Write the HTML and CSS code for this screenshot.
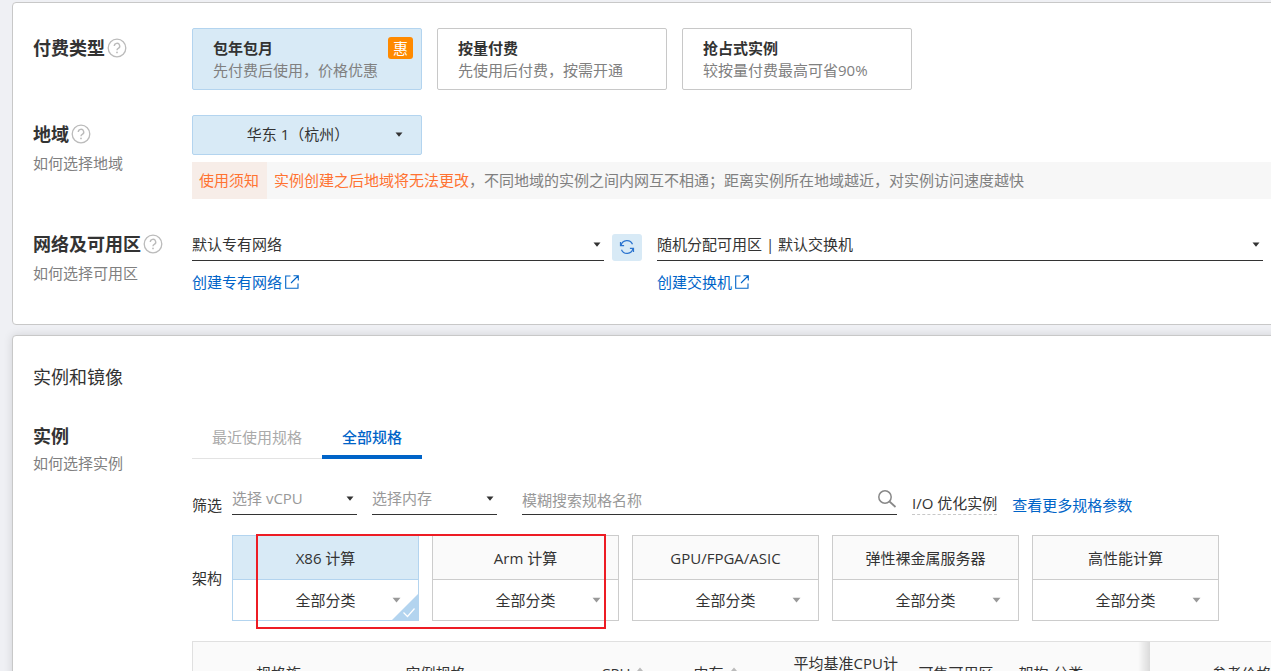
FILE: index.html
```html
<!DOCTYPE html>
<html lang="zh-CN">
<head>
<meta charset="utf-8">
<title>云服务器购买</title>
<link rel="stylesheet" href="styles.css">
</head>
<body>
<svg class="defs" aria-hidden="true">
  <symbol id="help" viewBox="0 0 20 20"><circle cx="10" cy="10" r="8.800" fill="none" stroke="#bbb" stroke-width="1.3"/><path d="M7.3 8.1a2.7 2.7 0 1 1 4 2.3c-.9.5-1.3.9-1.3 1.9" fill="none" stroke="#bbb" stroke-width="1.4"/><circle cx="10" cy="14.4" r=".9" fill="#bbb"/></symbol>
  <symbol id="caret" viewBox="0 0 8 5"><path d="M0.5 0.5h7L4 4.8z" fill="currentColor"/></symbol>
  <symbol id="ext" viewBox="0 0 14 14"><path d="M5.5 1H.7v12.3H13V8.500M8.500.8H13.300V5.500M13 1 6 8" fill="none" stroke="currentColor" stroke-width="1.1"/></symbol>
  <symbol id="sync" viewBox="0 0 16 16"><path d="M2.100 6.300A6 6 0 0 1 13.500 5.300M13.900 9.700A6 6 0 0 1 2.500 10.700" fill="none" stroke="#2b74cf" stroke-width="1.200"/><path d="M1.500 3v3.700h3.600M14.500 13V9.300h-3.600" fill="none" stroke="#2b74cf" stroke-width="1.200"/></symbol>
</svg>
<main class="page">
  <section class="panel">
    <div class="row row-pay">
      <h3 class="label">付费类型<svg class="help"><use href="#help"/></svg></h3>
      <div class="options">
        <button type="button" class="option selected"><strong>包年包月</strong><span>先付费后使用，价格优惠</span><em class="badge">惠</em></button>
        <button type="button" class="option"><strong>按量付费</strong><span>先使用后付费，按需开通</span></button>
        <button type="button" class="option"><strong>抢占式实例</strong><span>较按量付费最高可省90%</span></button>
      </div>
    </div>
    <div class="row row-region">
      <div>
        <h3 class="label">地域<svg class="help"><use href="#help"/></svg></h3>
        <a class="hint" href="#region">如何选择地域</a>
      </div>
      <div class="stack">
        <div class="select boxed"><select aria-label="地域"><option>华东 1（杭州）</option></select><svg class="caret"><use href="#caret"/></svg></div>
        <div class="notice"><span class="tag">使用须知</span><p><b>实例创建之后地域将无法更改</b>，不同地域的实例之间内网互不相通；距离实例所在地域越近，对实例访问速度越快</p></div>
      </div>
    </div>
    <div class="row row-net">
      <div>
        <h3 class="label">网络及可用区<svg class="help"><use href="#help"/></svg></h3>
        <a class="hint" href="#zone">如何选择可用区</a>
      </div>
      <div class="network">
        <div class="select line"><select aria-label="专有网络"><option>默认专有网络</option></select><svg class="caret"><use href="#caret"/></svg></div>
        <button type="button" class="sync" aria-label="刷新"><svg><use href="#sync"/></svg></button>
        <div class="select line"><select aria-label="交换机"><option>随机分配可用区 | 默认交换机</option></select><svg class="caret"><use href="#caret"/></svg></div>
        <button type="button" class="sync" aria-label="刷新"><svg><use href="#sync"/></svg></button>
        <a class="create" href="#vpc">创建专有网络<svg><use href="#ext"/></svg></a>
        <a class="create second" href="#switch">创建交换机<svg><use href="#ext"/></svg></a>
      </div>
    </div>
  </section>

  <section class="panel panel-instance">
    <h2 class="heading">实例和镜像</h2>
    <div class="row">
      <div class="instance-label">
        <h3 class="label">实例</h3>
        <a class="hint" href="#instance">如何选择实例</a>
      </div>
      <div class="content">
        <div class="tabs" role="tablist">
          <button type="button" role="tab" class="tab">最近使用规格</button>
          <button type="button" role="tab" class="tab active" aria-selected="true">全部规格</button>
        </div>
        <div class="filters">
          <span class="name">筛选</span>
          <div class="select line muted"><select aria-label="vCPU"><option>选择 vCPU</option></select><svg class="caret"><use href="#caret"/></svg></div>
          <div class="select line muted"><select aria-label="内存"><option>选择内存</option></select><svg class="caret"><use href="#caret"/></svg></div>
          <label class="search"><input type="text" placeholder="模糊搜索规格名称" aria-label="搜索规格"><svg viewBox="0 0 20 20"><circle cx="8" cy="8" r="6.200" fill="none" stroke="#888" stroke-width="1.500"/><path d="m12.500 12.500 6 5.500" stroke="#888" stroke-width="1.700"/></svg></label>
          <span class="io">I/O 优化实例</span>
          <a class="more" href="#specs">查看更多规格参数</a>
        </div>
        <div class="arch">
          <span class="name">架构</span>
          <div class="cards">
            <div class="card selected"><button type="button" class="top">X86 计算</button><button type="button" class="bottom">全部分类<svg class="caret"><use href="#caret"/></svg></button><svg class="corner" viewBox="0 0 26 26"><path d="M26 0v26H0z" fill="#b3d4ef"/><path d="m11.500 18.500 4 4 7-8" fill="none" stroke="#fff" stroke-width="1.200"/></svg></div>
            <div class="card"><button type="button" class="top">Arm 计算</button><button type="button" class="bottom">全部分类<svg class="caret"><use href="#caret"/></svg></button></div>
            <div class="card"><button type="button" class="top">GPU/FPGA/ASIC</button><button type="button" class="bottom">全部分类<svg class="caret"><use href="#caret"/></svg></button></div>
            <div class="card"><button type="button" class="top">弹性裸金属服务器</button><button type="button" class="bottom">全部分类<svg class="caret"><use href="#caret"/></svg></button></div>
            <div class="card"><button type="button" class="top">高性能计算</button><button type="button" class="bottom">全部分类<svg class="caret"><use href="#caret"/></svg></button></div>
          </div>
          <div class="marker"></div>
        </div>
        <table class="specs">
          <colgroup><col class="c-family"><col class="c-spec"><col class="c-cpu"><col class="c-mem"><col class="c-base"><col class="c-zone"><col class="c-arch"><col></colgroup>
          <thead><tr>
            <th class="first">规格族</th><th>实例规格</th>
            <th>vCPU<svg class="sort" viewBox="0 0 10 14"><path d="M0 6 5 0l5 6zM0 8h10l-5 6z" fill="#bbb"/></svg></th>
            <th>内存<svg class="sort" viewBox="0 0 10 14"><path d="M0 6 5 0l5 6zM0 8h10l-5 6z" fill="#bbb"/></svg></th>
            <th>平均基准CPU计算性能</th><th>可售可用区</th><th class="edge">架构-分类</th><th class="price">参考价格</th>
          </tr></thead>
        </table>
      </div>
    </div>
  </section>
</main>
</body>
</html>
```
FILE: styles.css
```css
* { box-sizing: border-box; }
html, body { height: 100%; }
body {
  margin: 0;
  overflow: hidden;
  background: #eff0f4;
  color: #333;
  font: 15px/20px "Open Sans", "Noto Sans CJK SC", sans-serif;
}
button, input, select { font: inherit; color: inherit; }
button { cursor: pointer; }
a { color: #0064c8; text-decoration: none; }
h2, h3, p { margin: 0; }
.defs { display: none; }
.page {
  display: flex;
  flex-direction: column;
  gap: 10px;
  width: calc(100% + 31px);
  padding: 2px 0 0 12px;
}
.panel {
  padding: 25px 0 32px 20px;
  background: #fff;
  border: 1px solid #c8c8c8;
  border-radius: 4px;
}
.panel-instance { padding: 28px 0 0 20px; box-shadow: 0 0 10px rgba(0, 0, 0, .12); }
.row { display: grid; grid-template-columns: 159px minmax(0, 1fr); }
.row-pay { margin-bottom: 25px; }
.row-region { margin-bottom: 26px; }
.label {
  display: flex;
  align-items: center;
  gap: 2px;
  height: 40px;
  font-size: 18px;
  font-weight: 700;
  white-space: nowrap;
}
.row-region .label, .row-net .label, .instance-label .label { height: 38px; }
.help { width: 20px; height: 20px; }
.hint { display: block; color: #808080; }

.options { display: flex; gap: 15px; }
.option {
  position: relative;
  display: flex;
  flex-direction: column;
  justify-content: center;
  gap: 2px;
  width: 230px;
  height: 62px;
  padding: 0 20px;
  background: #fff;
  border: 1px solid #c8c8c8;
  border-radius: 2px;
  text-align: left;
}
.option span { color: #808080; white-space: nowrap; }
.option.selected { background: #d8eaf6; border-color: #b3d4ef; }
.badge {
  position: absolute;
  top: 8px;
  right: 8px;
  width: 25px;
  border-radius: 3px;
  background: #ff8a00;
  color: #fff;
  font-style: normal;
  line-height: 22px;
  text-align: center;
}

.select { position: relative; }
.select select {
  width: 100%;
  height: 100%;
  padding: 0 20px 2px 0;
  border: 0;
  outline: 0;
  background: none;
  appearance: none;
}
.caret { width: 8px; height: 5px; }
.select .caret { position: absolute; right: 3px; top: 13px; pointer-events: none; }
.boxed { width: 230px; height: 40px; background: #d8eaf6; border: 1px solid #b3d4ef; border-radius: 2px; }
.select.boxed select { padding: 0 18px 2px 0; text-align: center; text-align-last: center; }
.select.boxed .caret { right: 18px; top: 16px; }
.line { height: 32px; border-bottom: 1px solid #333; }
.stack { display: grid; gap: 7px; }
.notice { display: flex; background: #f7f7f7; color: #808080; line-height: 37px; white-space: nowrap; }
.notice b { color: #ff7332; font-weight: 400; }
.tag { padding: 0 8px 0 7px; margin-right: 7px; background: #f7ede8; color: #ff7332; }

.network {
  display: grid;
  grid-template-columns: 412px 30px minmax(0, 1fr) 30px;
  column-gap: 8px;
  row-gap: 11px;
  align-items: end;
  padding-top: 4px;
}
.network .line:nth-of-type(2) { margin-left: 7px; }
.sync { display: grid; place-items: center; width: 30px; height: 27px; padding: 0 0 2px; border: 0; border-radius: 3px; background: #d8eaf6; }
.sync svg { width: 16px; height: 16px; }
.create { display: flex; align-items: center; gap: 3px; }
.create svg { width: 14px; height: 14px; }
.second { grid-column: 3; margin-left: 7px; }

.heading { font-size: 18px; font-weight: 400; line-height: 26px; margin-bottom: 27px; }
.content { min-width: 0; }
.tabs { display: flex; width: 230px; height: 42px; box-shadow: inset 0 -1px #e3e3e3; }
.tab { padding: 2px 20px 0; border: 0; border-bottom: 4px solid transparent; background: none; color: #aaa; white-space: nowrap; }
.tab.active { border-color: #0064c8; color: #0064c8; font-weight: 500; }
.instance-label .hint { margin-top: -2px; }

.filters { display: flex; align-items: flex-end; height: 56px; white-space: nowrap; }
.name { width: 40px; flex: none; }
.filters .select { width: 125px; margin-right: 15px; }
.muted select { color: #999; }
.search { display: flex; align-items: center; width: 375px; height: 32px; margin: 0 15px 0 10px; border-bottom: 1px solid #333; }
.search input { flex: 1; min-width: 0; padding: 2px 0 0; border: 0; outline: 0; background: none; }
.search input::placeholder { color: #999; opacity: 1; }
.search svg { width: 20px; height: 20px; }
.io { margin-right: 15px; padding-bottom: 1px; border-bottom: 1px dashed #c8c8c8; }

.arch { position: relative; display: flex; align-items: center; margin: 20px 0; }
.cards { display: flex; gap: 13px; }
.card { position: relative; width: 187px; border: 1px solid #ccc; }
.card button { display: block; width: 100%; padding: 0; border: 0; background: #fff; }
.card .top { height: 44px; background: #fafafa; border-bottom: 1px solid #ccc; }
.card .bottom { position: relative; height: 40px; }
.bottom .caret { position: absolute; right: 17px; top: 17px; width: 9px; height: 6px; color: #999; }
.card.selected, .card.selected .top { border-color: #b3d4ef; }
.card.selected .top { background: #d8eaf6; }
.corner { position: absolute; right: 0; bottom: 0; width: 26px; height: 26px; }
.marker { position: absolute; left: 64px; top: -1px; width: 350px; height: 95px; border: 2px solid #ed1c24; pointer-events: none; }

.specs { width: 100%; table-layout: fixed; border-collapse: collapse; background: #fafafa; border: 1px solid #e0e0e0; }
.specs th { height: 62px; padding: 0 15px 0 0; font-weight: 400; text-align: left; }
.specs .first { padding-left: 63px; }
.specs .edge { background: linear-gradient(to left, #dadada, #fafafa 12px); }
.specs .price { padding-left: 62px; }
.c-family { width: 213px; }
.c-spec { width: 188px; }
.c-cpu { width: 100px; }
.c-mem { width: 100px; }
.c-base { width: 125px; }
.c-zone { width: 100px; }
.c-arch { width: 131px; }
.sort { width: 8px; height: 12px; margin-left: 6px; }
```
